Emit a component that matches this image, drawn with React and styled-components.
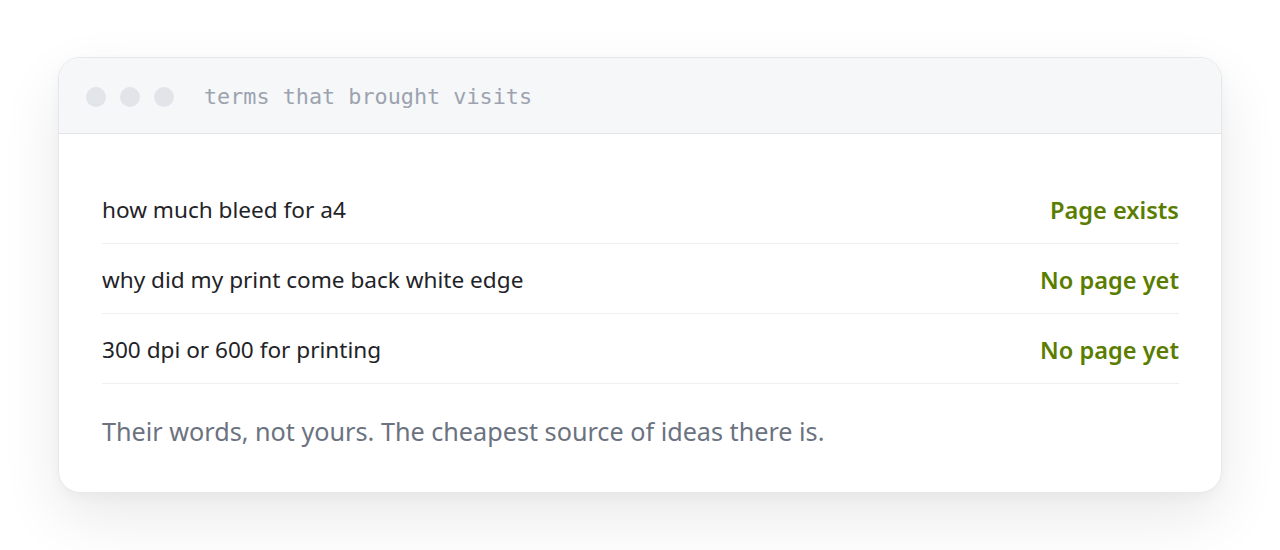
import React from 'react';
import styled, { createGlobalStyle } from 'styled-components';

const GlobalStyle = createGlobalStyle`
  body {
    margin: 0;
    background: #fff;
    font-family: "Noto Sans", "Open Sans", sans-serif;
  }
`;

const Page = styled.div`
  padding: 57px 58px;
  height: 550px;
  box-sizing: border-box;
`;

const Card = styled.div`
  background: #fff;
  border: 1px solid #e6e8eb;
  border-radius: 22px;
  overflow: hidden;
  box-shadow: 0 24px 60px rgba(0, 0, 0, 0.09), 0 4px 12px rgba(0, 0, 0, 0.03);
`;

const TitleBar = styled.div`
  display: flex;
  align-items: center;
  gap: 14px;
  height: 76px;
  padding: 2px 27px 0;
  box-sizing: border-box;
  background: #f6f7f9;
  border-bottom: 1px solid #e3e5e8;
`;

const Dot = styled.span`
  width: 20px;
  height: 20px;
  border-radius: 50%;
  background: #e1e4e8;
`;

const Title = styled.span`
  margin-left: 16px;
  font-family: "DejaVu Sans Mono", "Liberation Mono", monospace;
  font-size: 21.8px;
  color: #9ca3af;
`;

const Body = styled.div`
  padding: 40px 42px 44px 43px;
`;

const Row = styled.div`
  display: flex;
  justify-content: space-between;
  align-items: center;
  height: 70px;
  padding-top: 2px;
  box-sizing: border-box;
  border-bottom: 1px solid #eeeff1;
  font-size: 22.6px;
`;

const Term = styled.span`
  color: #1f2328;
`;

const Status = styled.span`
  color: #5a7d00;
  font-weight: 600;
  font-size: 23.6px;
`;

const Note = styled.p`
  margin: 30px 0 0;
  font-size: 25.2px;
  line-height: 34px;
  color: #6b7280;
`;

const rows = [
  ['how much bleed for a4', 'Page exists'],
  ['why did my print come back white edge', 'No page yet'],
  ['300 dpi or 600 for printing', 'No page yet'],
];

export default function App() {
  return (
    <Page>
      <GlobalStyle />
      <Card>
        <TitleBar>
          <Dot />
          <Dot />
          <Dot />
          <Title>terms that brought visits</Title>
        </TitleBar>
        <Body>
          {rows.map(([term, status]) => (
            <Row key={term}>
              <Term>{term}</Term>
              <Status>{status}</Status>
            </Row>
          ))}
          <Note>Their words, not yours. The cheapest source of ideas there is.</Note>
        </Body>
      </Card>
    </Page>
  );
}
